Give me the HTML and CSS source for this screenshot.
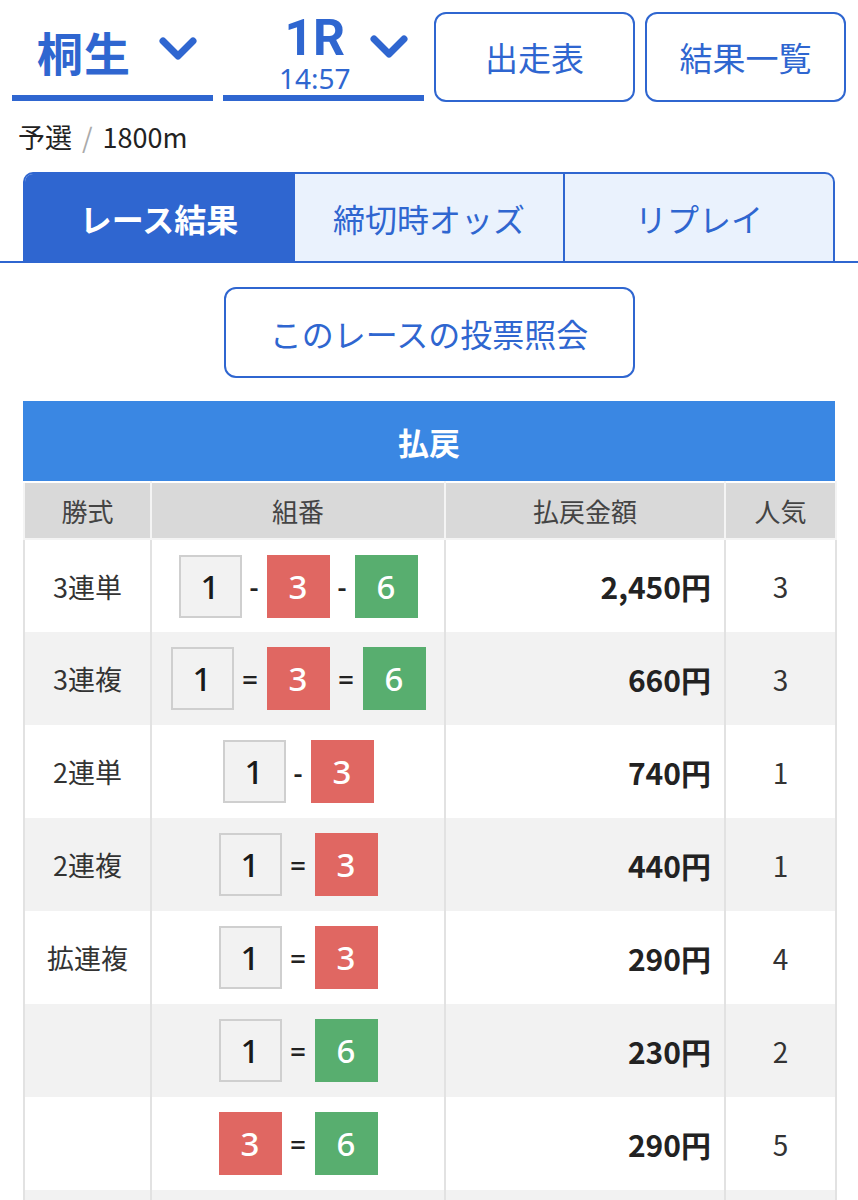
FILE: index.html
```html
<!DOCTYPE html>
<html lang="ja">
<head>
<meta charset="utf-8">
<link rel="stylesheet" href="styles.css">
</head>
<body>
<div class="page">
  <div class="topbar">
    <div class="select sel-place">
      <span class="place">桐生</span>
      <svg class="chev" width="38" height="26" viewBox="0 0 38 26"><polyline points="4,5 19,20 34,5" fill="none" stroke="#2f66d0" stroke-width="7" stroke-linecap="round" stroke-linejoin="round"/></svg>
    </div>
    <div class="select sel-race">
      <div class="race">
        <span class="rno">1R</span>
        <span class="rtime">14:57</span>
      </div>
      <svg class="chev" width="38" height="26" viewBox="0 0 38 26"><polyline points="4,5 19,20 34,5" fill="none" stroke="#2f66d0" stroke-width="7" stroke-linecap="round" stroke-linejoin="round"/></svg>
    </div>
    <a class="btn">出走表</a>
    <a class="btn">結果一覧</a>
  </div>

  <div class="sub">予選<span class="slash">/</span>1800m</div>

  <div class="tabs-wrap">
    <div class="tabs">
      <div class="tab active">レース結果</div>
      <div class="tab">締切時オッズ</div>
      <div class="tab">リプレイ</div>
    </div>
  </div>

  <div class="vote-row">
    <a class="vote">このレースの投票照会</a>
  </div>

  <div class="payout">
    <div class="ptitle">払戻</div>
    <table class="ptable">
      <colgroup>
        <col class="c1"><col class="c2"><col class="c3"><col class="c4">
      </colgroup>
      <thead>
        <tr><th>勝式</th><th>組番</th><th>払戻金額</th><th>人気</th></tr>
      </thead>
      <tbody>
        <tr>
          <td class="kind">3連単</td>
          <td><div class="combo"><span class="b b1">1</span><span class="sep dash">-</span><span class="b b3">3</span><span class="sep dash">-</span><span class="b b6">6</span></div></td>
          <td class="amt">2,450円</td>
          <td class="pop">3</td>
        </tr>
        <tr class="alt">
          <td class="kind">3連複</td>
          <td><div class="combo"><span class="b b1">1</span><span class="sep eq">=</span><span class="b b3">3</span><span class="sep eq">=</span><span class="b b6">6</span></div></td>
          <td class="amt">660円</td>
          <td class="pop">3</td>
        </tr>
        <tr>
          <td class="kind">2連単</td>
          <td><div class="combo"><span class="b b1">1</span><span class="sep dash">-</span><span class="b b3">3</span></div></td>
          <td class="amt">740円</td>
          <td class="pop">1</td>
        </tr>
        <tr class="alt">
          <td class="kind">2連複</td>
          <td><div class="combo"><span class="b b1">1</span><span class="sep eq">=</span><span class="b b3">3</span></div></td>
          <td class="amt">440円</td>
          <td class="pop">1</td>
        </tr>
        <tr>
          <td class="kind">拡連複</td>
          <td><div class="combo"><span class="b b1">1</span><span class="sep eq">=</span><span class="b b3">3</span></div></td>
          <td class="amt">290円</td>
          <td class="pop">4</td>
        </tr>
        <tr class="alt">
          <td class="kind"></td>
          <td><div class="combo"><span class="b b1">1</span><span class="sep eq">=</span><span class="b b6">6</span></div></td>
          <td class="amt">230円</td>
          <td class="pop">2</td>
        </tr>
        <tr>
          <td class="kind"></td>
          <td><div class="combo"><span class="b b3">3</span><span class="sep eq">=</span><span class="b b6">6</span></div></td>
          <td class="amt">290円</td>
          <td class="pop">5</td>
        </tr>
        <tr class="alt">
          <td class="kind"></td>
          <td></td>
          <td class="amt"></td>
          <td class="pop"></td>
        </tr>
      </tbody>
    </table>
  </div>
</div>
</body>
</html>
```

FILE: styles.css
```css
* { box-sizing: border-box; }
html, body {
  margin: 0;
  padding: 0;
  background: #ffffff;
}
body {
  font-family: "Noto Sans CJK JP", "Noto Sans", sans-serif;
  color: #222;
  width: 858px;
  overflow: hidden;
}
.page { width: 858px; }

.topbar {
  display: flex;
  gap: 10px;
  padding: 12px 12px 0 12px;
}
.select {
  width: 201px;
  height: 89px;
  border-bottom: 6px solid #2f66d0;
  display: flex;
  align-items: center;
  color: #2f66d0;
}
.sel-place {
  padding: 0 16px 0 25px;
  justify-content: space-between;
}
.place {
  font-size: 46px;
  font-weight: 700;
  line-height: 1;
  margin-top: -6px;
  letter-spacing: 1px;
}
.chev { display: block; flex: none; }
.sel-place .chev { margin-top: -10px; }
.sel-race {
  padding: 0 16px 0 56px;
  justify-content: space-between;
}
.sel-race .chev { margin-top: -14px; }
.race {
  display: flex;
  flex-direction: column;
  align-items: center;
}
.rno {
  font-family: "Roboto", "Noto Sans", sans-serif;
  font-size: 50px;
  font-weight: 700;
  line-height: 44px;
}
.rtime {
  font-family: "Noto Sans", sans-serif;
  font-size: 28px;
  line-height: 28px;
  margin-top: 4px;
  font-weight: 400;
}
.btn {
  width: 201px;
  height: 90px;
  border: 2px solid #2f66d0;
  border-radius: 12px;
  display: flex;
  align-items: center;
  justify-content: center;
  font-size: 33px;
  color: #2f66d0;
  text-decoration: none;
}

.sub {
  padding: 16px 0 0 18px;
  height: 70px;
  font-size: 27px;
  line-height: 38px;
  color: #222;
}
.slash {
  color: #aaa;
  margin: 0 10px;
}

.tabs-wrap {
  border-bottom: 2px solid #2f66d0;
  padding: 0 23px 0 23px;
}
.tabs {
  display: flex;
  height: 89px;
  border: 2px solid #2f66d0;
  border-bottom: none;
  border-radius: 10px 10px 0 0;
  overflow: hidden;
  background: #eaf2fd;
}
.tab {
  flex: 1;
  display: flex;
  align-items: center;
  justify-content: center;
  font-size: 32px;
  color: #2f66d0;
}
.tab + .tab { border-left: 2px solid #2f66d0; }
.tab.active {
  background: #2f66d0;
  color: #fff;
  font-weight: 700;
}

.vote-row {
  display: flex;
  justify-content: center;
  padding-top: 24px;
}
.vote {
  width: 411px;
  height: 91px;
  border: 2px solid #2f66d0;
  border-radius: 12px;
  display: flex;
  align-items: center;
  justify-content: center;
  font-size: 32px;
  color: #2f66d0;
  text-decoration: none;
}

.payout {
  margin: 23px 23px 0 23px;
}
.ptitle {
  height: 80px;
  background: #3a87e3;
  color: #fff;
  font-size: 31px;
  font-weight: 700;
  display: flex;
  align-items: center;
  justify-content: center;
}
.ptable {
  width: 812px;
  border-collapse: collapse;
  table-layout: fixed;
}
.c1 { width: 127px; }
.c2 { width: 294px; }
.c3 { width: 280px; }
.c4 { width: 111px; }
.ptable th {
  background: #d9d9d9;
  height: 57px;
  font-size: 26px;
  font-weight: 400;
  color: #444;
  border: 2px solid #f4f4f4;
  border-top: 2px solid #fff;
  padding: 0;
}
.ptable td {
  height: 93px;
  border-left: 2px solid #e2e2e2;
  border-right: 2px solid #e2e2e2;
  padding: 0;
  text-align: center;
  vertical-align: middle;
}
.ptable tr.alt td { background: #f2f2f2; }
.kind {
  font-size: 27px;
  color: #333;
}
.amt {
  text-align: right !important;
  padding-right: 13px !important;
  font-size: 30px;
  font-weight: 700;
  color: #222;
}
.pop {
  font-size: 28px;
  color: #333;
}
.combo {
  display: flex;
  justify-content: center;
  align-items: center;
}
.b {
  width: 63px;
  height: 63px;
  display: flex;
  align-items: center;
  justify-content: center;
  font-family: "Noto Sans", sans-serif;
  font-size: 33px;
  font-weight: 500;
}
.b1 {
  background: #f2f2f2;
  border: 2px solid #cfcfcf;
  color: #1a1a1a;
}
.b3 {
  background: #e06762;
  color: #fff;
}
.b6 {
  background: #58ae6f;
  color: #fff;
}
.sep {
  font-family: "Noto Sans", sans-serif;
  font-size: 28px;
  font-weight: 500;
  color: #222;
  text-align: center;
}
.dash { width: 25px; }
.eq { width: 33px; }
```
